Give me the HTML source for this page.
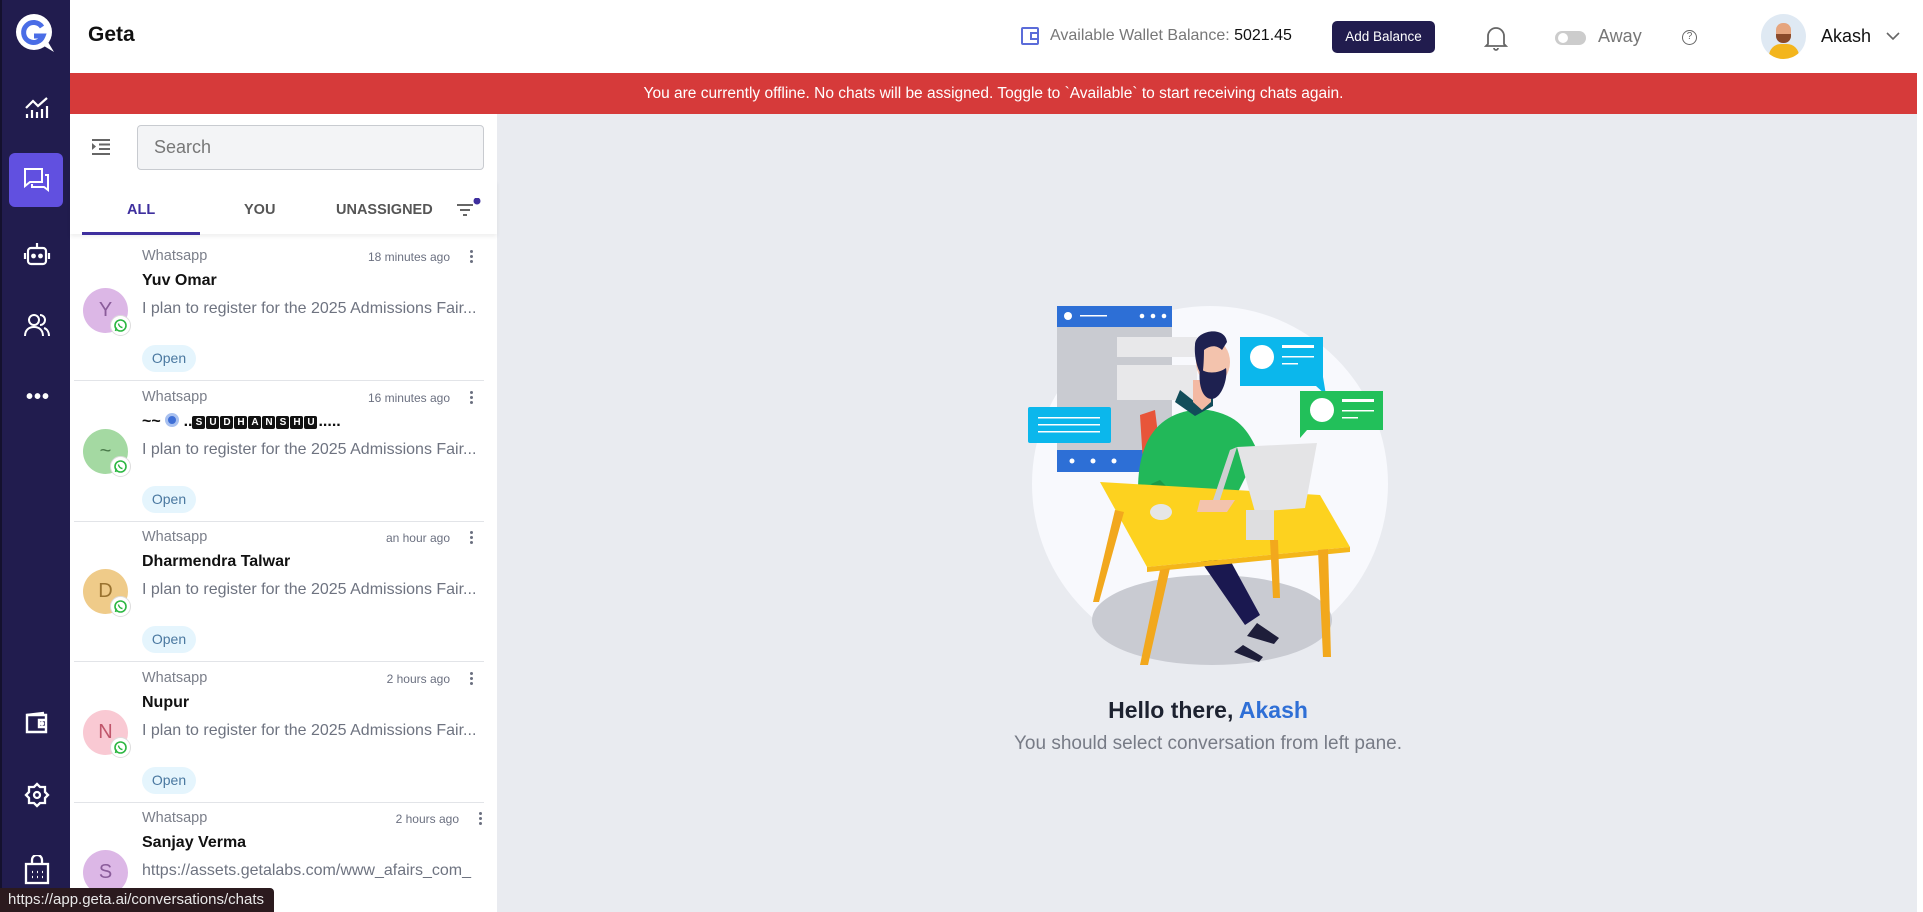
<!DOCTYPE html>
<html style="width:1923px;height:912px;overflow:hidden;background:#e9ebf0"><head><meta charset="utf-8">
<style>
*{box-sizing:border-box;margin:0;padding:0}
body{width:1923px;height:912px;overflow:hidden;font-family:"Liberation Sans",sans-serif;background:#e9ebf0;position:relative}
.abs{position:absolute}
#side{left:0;top:0;width:70px;height:912px;background:#211c4e;border-left:2px solid #14112e}
#hdr{left:70px;top:0;width:1853px;height:73px;background:#fff}
#red{left:70px;top:73px;width:1847px;height:41px;background:#d63a3a;color:#fff;font-size:15.5px;text-align:center;line-height:41px}
#left{left:70px;top:114px;width:427px;height:798px;background:#fff}
.item{position:absolute;left:0;width:427px;height:141px}
.item .sep{position:absolute;left:4px;right:13px;bottom:0;border-bottom:1.5px solid #e2e4e8}
.src{position:absolute;left:72px;top:8px;font-size:14.5px;color:#7b7f8a}
.time{position:absolute;right:47px;top:10px;font-size:12px;color:#6b7080}
.dots{position:absolute;right:23px;top:10px;width:4px;height:14px}
.dots i{display:block;width:3px;height:3px;border-radius:50%;background:#6b7080;margin-bottom:2px}
.nm{position:absolute;left:72px;top:32px;font-size:16px;font-weight:bold;color:#111}
.pv{position:absolute;left:72px;top:60px;font-size:16px;color:#6e7380;white-space:nowrap;width:340px;overflow:hidden}
.pill{position:absolute;left:72px;top:105px;width:54px;height:27px;border-radius:14px;background:#e5f5fd;color:#4a78a0;font-size:14px;text-align:center;line-height:27px}
.av{position:absolute;left:13px;top:48px;width:45px;height:45px;border-radius:50%;font-size:20px;text-align:center;line-height:45px}
.wa{position:absolute;left:40px;top:75px;width:21px;height:21px;border-radius:50%;background:#fff;border:1px solid #ddd}
.sq{display:inline-block;background:#111;color:#fff;font-size:10px;width:13px;height:13px;line-height:13px;text-align:center;border-radius:2px;margin-right:1px;vertical-align:1px}
</style></head><body>

<div id="side" class="abs">
 <svg class="abs" style="left:12px;top:12px" width="44" height="44" viewBox="0 0 44 44"><circle cx="20" cy="20" r="18" fill="#fff"/><path d="M30 34 L40 40 L34 30Z" fill="#fff"/><path d="M28 15 A10 10 0 1 0 29 24 L20 24" fill="none" stroke="#4a6de6" stroke-width="5"/></svg>
 <svg class="abs" style="left:22px;top:96px" width="26" height="24" viewBox="0 0 26 24" fill="none" stroke="#fff" stroke-width="2.2"><path d="M2 12 L9 5 L14 10 L23 2"/><path d="M3 22v-4M8 22v-8M13 22v-6M18 22v-9M23 22v-12"/></svg>
 <div class="abs" style="left:7px;top:153px;width:54px;height:54px;background:#6150e0;border-radius:6px"></div>
 <svg class="abs" style="left:21px;top:167px" width="27" height="26" viewBox="0 0 27 26" fill="none" stroke="#fff" stroke-width="2"><path d="M2 2h17v13H7l-5 4z"/><path d="M22 8h3v15l-4-3H9v-3"/></svg>
 <svg class="abs" style="left:21px;top:240px" width="28" height="28" viewBox="0 0 28 28" fill="none" stroke="#fff" stroke-width="2.2"><rect x="5" y="8" width="18" height="16" rx="3"/><path d="M14 8V3M2 13v6M26 13v6"/><circle cx="10.5" cy="16" r="1.3" fill="#fff"/><circle cx="17.5" cy="16" r="1.3" fill="#fff"/></svg>
 <svg class="abs" style="left:22px;top:312px" width="26" height="26" viewBox="0 0 26 26" fill="none" stroke="#fff" stroke-width="2"><circle cx="10" cy="8" r="5"/><path d="M1 24c0-6 4-9 9-9s9 3 9 9"/><path d="M16 3a5 5 0 0 1 0 10M20 16c3 1 5 4 5 8"/></svg>
 <div class="abs" style="left:24px;top:386px;color:#fff;font-size:20px;font-weight:bold;letter-spacing:1px">•••</div>
 <svg class="abs" style="left:22px;top:711px" width="26" height="24" viewBox="0 0 26 24" fill="none" stroke="#fff" stroke-width="2.4"><path d="M3 4h19v17H3z"/><path d="M3 4l17-2"/><path d="M22 9h-7v7h7"/><circle cx="18" cy="12.5" r="1" fill="#fff"/></svg>
 <svg class="abs" style="left:22px;top:782px" width="26" height="26" viewBox="0 0 26 26" fill="none" stroke="#fff" stroke-width="2.3"><path d="M13 2l3 3h5v5l3 3-3 3v5h-5l-3 3-3-3H5v-5l-3-3 3-3V5h5z"/><circle cx="13" cy="13" r="3"/></svg>
 <svg class="abs" style="left:22px;top:855px" width="26" height="30" viewBox="0 0 26 30" fill="none" stroke="#fff" stroke-width="2.3"><rect x="2" y="9" width="22" height="19"/><path d="M8 9V5a5 5 0 0 1 10 0v4"/><path d="M8 17h1M13 17h1M18 17h1M8 22h1M13 22h1M18 22h1"/></svg>
</div>

<div id="hdr" class="abs">
 <div class="abs" style="left:18px;top:23px;font-size:21px;font-weight:bold;color:#111">Geta</div>
 <svg class="abs" style="left:950px;top:26px" width="20" height="20" viewBox="0 0 20 20" fill="none" stroke="#5b6cd9" stroke-width="2"><rect x="2" y="2" width="16" height="16" rx="1"/><path d="M18 7h-7v6h7"/></svg>
 <div class="abs" style="left:980px;top:27px;font-size:16px;color:#777"><span>Available Wallet Balance:</span> <span style="color:#111">5021.45</span></div>
 <div class="abs" style="left:1262px;top:21px;width:103px;height:32px;border-radius:5px;background:#211c4e;color:#fff;font-size:13.5px;text-align:center;line-height:32px">Add Balance</div>
 <svg class="abs" style="left:1414px;top:24px" width="24" height="27" viewBox="0 0 24 27" fill="none" stroke="#666" stroke-width="1.8"><path d="M4 20V12a8 8 0 0 1 16 0v8l2 2H2z"/><path d="M10 24a2 2 0 0 0 4 0"/></svg>
 <div class="abs" style="left:1485px;top:31px;width:31px;height:14px;border-radius:7px;background:#ccc"></div>
 <div class="abs" style="left:1488px;top:33px;width:10px;height:10px;border-radius:50%;background:#fff"></div>
 <div class="abs" style="left:1528px;top:26px;font-size:18px;color:#777">Away</div>
 <div class="abs" style="left:1612px;top:30px;width:15px;height:15px;border-radius:50%;border:1.5px solid #666;font-size:10px;text-align:center;line-height:12px;color:#666">?</div>
 <div class="abs" style="left:1691px;top:14px;width:45px;height:45px;border-radius:50%;background:#dfe9f3;overflow:hidden">
  <div class="abs" style="left:8px;top:30px;width:30px;height:22px;border-radius:12px 12px 0 0;background:#f3b51d"></div>
  <div class="abs" style="left:15px;top:9px;width:15px;height:19px;border-radius:7px;background:#e6a57e"></div>
  <div class="abs" style="left:15px;top:20px;width:15px;height:9px;border-radius:0 0 7px 7px;background:#8a4a2a"></div>
 </div>
 <div class="abs" style="left:1751px;top:26px;font-size:18px;color:#111">Akash</div>
 <svg class="abs" style="left:1816px;top:32px" width="14" height="9" viewBox="0 0 14 9" fill="none" stroke="#666" stroke-width="1.6"><path d="M1 1l6 6 6-6"/></svg>
</div>

<div id="red" class="abs">You are currently offline. No chats will be assigned. Toggle to `Available` to start receiving chats again.</div>
<div class="abs" style="left:1917px;top:73px;width:6px;height:839px;background:#fff"></div>

<div id="left" class="abs">
 <svg class="abs" style="left:22px;top:24px" width="18" height="18" viewBox="0 0 18 18" fill="#666"><rect x="0" y="1" width="18" height="2"/><rect x="7" y="5.5" width="11" height="2"/><rect x="7" y="10" width="11" height="2"/><rect x="0" y="15" width="18" height="2"/><path d="M0 5l4 3.5L0 12z"/></svg>
 <div class="abs" style="left:67px;top:11px;width:347px;height:45px;border:1px solid #c8cbd0;border-radius:4px;background:#f3f4f6;font-size:18px;color:#777;padding-left:16px;line-height:43px">Search</div>
 <div class="abs" style="left:0;top:66px;width:427px;height:54px;box-shadow:0 3px 4px rgba(0,0,0,.06)"></div>
 <div class="abs" style="left:57px;top:88px;font-size:14.5px;font-weight:bold;color:#3e2f9e">ALL</div>
 <div class="abs" style="left:174px;top:88px;font-size:14.5px;font-weight:bold;color:#555">YOU</div>
 <div class="abs" style="left:266px;top:88px;font-size:14.5px;font-weight:bold;color:#555">UNASSIGNED</div>
 <div class="abs" style="left:12px;top:118px;width:118px;height:3px;background:#3e2f9e"></div>
 <svg class="abs" style="left:387px;top:84px" width="24" height="20" viewBox="0 0 24 20" fill="#666"><rect x="0" y="6" width="16" height="2"/><rect x="3" y="11" width="10" height="2"/><rect x="6" y="16" width="4" height="2"/><circle cx="20" cy="3" r="3.5" fill="#3e2f9e"/></svg>

 <div class="item" style="top:126px">
  <div class="src">Whatsapp</div><div class="time">18 minutes ago</div><div class="dots"><i></i><i></i><i></i></div>
  <div class="nm">Yuv Omar</div><div class="pv">I plan to register for the 2025 Admissions Fair...</div><div class="pill">Open</div>
  <div class="av" style="background:#dcb7e6;color:#8a5c9a">Y</div><div class="wa"><svg width="19" height="19" viewBox="0 0 19 19"><circle cx="9.5" cy="9.5" r="5.5" fill="none" stroke="#2cb742" stroke-width="1.6"/><path d="M4.5 15l1-3.5" stroke="#2cb742" stroke-width="1.6"/><path d="M7.5 7.5c0 2 2 4 4 4" stroke="#2cb742" stroke-width="1.4" fill="none"/></svg></div>
  <div class="sep"></div>
 </div>
 <div class="item" style="top:267px">
  <div class="src">Whatsapp</div><div class="time">16 minutes ago</div><div class="dots"><i></i><i></i><i></i></div>
  <div class="nm">~~ <span style="display:inline-block;width:14px;height:14px;border-radius:50%;background:#3f6fd6;border:3px solid #a9c1f0;vertical-align:-1px"></span> ..<span class="sq">S</span><span class="sq">U</span><span class="sq">D</span><span class="sq">H</span><span class="sq">A</span><span class="sq">N</span><span class="sq">S</span><span class="sq">H</span><span class="sq">U</span>.....</div>
  <div class="pv">I plan to register for the 2025 Admissions Fair...</div><div class="pill">Open</div>
  <div class="av" style="background:#a4d9a2;color:#4a7a4a">~</div><div class="wa"><svg width="19" height="19" viewBox="0 0 19 19"><circle cx="9.5" cy="9.5" r="5.5" fill="none" stroke="#2cb742" stroke-width="1.6"/><path d="M4.5 15l1-3.5" stroke="#2cb742" stroke-width="1.6"/><path d="M7.5 7.5c0 2 2 4 4 4" stroke="#2cb742" stroke-width="1.4" fill="none"/></svg></div>
  <div class="sep"></div>
 </div>
 <div class="item" style="top:407px">
  <div class="src">Whatsapp</div><div class="time">an hour ago</div><div class="dots"><i></i><i></i><i></i></div>
  <div class="nm">Dharmendra Talwar</div><div class="pv">I plan to register for the 2025 Admissions Fair...</div><div class="pill">Open</div>
  <div class="av" style="background:#efcb89;color:#9a7330">D</div><div class="wa"><svg width="19" height="19" viewBox="0 0 19 19"><circle cx="9.5" cy="9.5" r="5.5" fill="none" stroke="#2cb742" stroke-width="1.6"/><path d="M4.5 15l1-3.5" stroke="#2cb742" stroke-width="1.6"/><path d="M7.5 7.5c0 2 2 4 4 4" stroke="#2cb742" stroke-width="1.4" fill="none"/></svg></div>
  <div class="sep"></div>
 </div>
 <div class="item" style="top:548px">
  <div class="src">Whatsapp</div><div class="time">2 hours ago</div><div class="dots"><i></i><i></i><i></i></div>
  <div class="nm">Nupur</div><div class="pv">I plan to register for the 2025 Admissions Fair...</div><div class="pill">Open</div>
  <div class="av" style="background:#f9c9d3;color:#c0566b">N</div><div class="wa"><svg width="19" height="19" viewBox="0 0 19 19"><circle cx="9.5" cy="9.5" r="5.5" fill="none" stroke="#2cb742" stroke-width="1.6"/><path d="M4.5 15l1-3.5" stroke="#2cb742" stroke-width="1.6"/><path d="M7.5 7.5c0 2 2 4 4 4" stroke="#2cb742" stroke-width="1.4" fill="none"/></svg></div>
  <div class="sep"></div>
 </div>
 <div class="item" style="top:688px">
  <div class="src">Whatsapp</div><div class="time" style="right:38px">2 hours ago</div><div class="dots" style="right:14px"><i></i><i></i><i></i></div>
  <div class="nm">Sanjay Verma</div><div class="pv" style="width:360px">https://assets.getalabs.com/www_afairs_com_</div>
  <div class="av" style="background:#dcb7e6;color:#8a5c9a">S</div>
 </div>
</div>

<div class="abs" style="left:0;top:888px;width:274px;height:24px;background:#2b1a1e;border-radius:0 4px 0 0;color:#e8e8e8;font-size:15px;line-height:24px;padding-left:8px">https://app.geta.ai/conversations/chats</div>

<svg class="abs" style="left:1020px;top:298px" width="380" height="372" viewBox="1020 298 380 372">
 <circle cx="1210" cy="484" r="178" fill="#f8f9fd"/>
 <ellipse cx="1212" cy="620" rx="120" ry="45" fill="#c9cbd2"/>
 <rect x="1057" y="306" width="115" height="166" fill="#c9cbd1"/>
 <rect x="1057" y="306" width="115" height="21" fill="#2d6fd6"/>
 <circle cx="1068" cy="316" r="4" fill="#fff"/><rect x="1080" y="315" width="27" height="1.5" fill="#fff"/>
 <circle cx="1142" cy="316" r="2.3" fill="#fff"/><circle cx="1153" cy="316" r="2.3" fill="#fff"/><circle cx="1164" cy="316" r="2.3" fill="#fff"/>
 <rect x="1057" y="450" width="115" height="22" fill="#2d6fd6"/>
 <circle cx="1072" cy="461" r="2.5" fill="#fff"/><circle cx="1093" cy="461" r="2.5" fill="#fff"/><circle cx="1114" cy="461" r="2.5" fill="#fff"/>
 <rect x="1117" y="337" width="80" height="20" fill="#e8e8ea"/><rect x="1117" y="365" width="80" height="35" fill="#e8e8ea"/>
 <rect x="1028" y="407" width="83" height="36" rx="2" fill="#0bb7ec"/>
 <rect x="1038" y="417" width="62" height="1.5" fill="#fff"/><rect x="1038" y="424" width="62" height="1.5" fill="#fff"/><rect x="1038" y="431" width="62" height="1.5" fill="#fff"/>
 <path d="M1240 337h83v40h0l3 18-10-9h-76z" fill="#0bb7ec"/>
 <circle cx="1262" cy="357" r="12" fill="#fff"/><rect x="1282" y="345" width="32" height="3" fill="#fff"/><rect x="1282" y="356" width="32" height="1.5" fill="#fff"/><rect x="1282" y="363" width="16" height="1.5" fill="#fff"/>
 <path d="M1300 391h83v39h-76l-7 8z" fill="#22c05a"/>
 <circle cx="1322" cy="410" r="12" fill="#fff"/><rect x="1342" y="399" width="32" height="3" fill="#fff"/><rect x="1342" y="410" width="32" height="1.5" fill="#fff"/><rect x="1342" y="417" width="16" height="1.5" fill="#fff"/>
 <path d="M1140 415l15-5 10 80-20 5z" fill="#e8553a"/>
 <path d="M1138 490c0-50 20-75 55-80h15c30 5 40 20 50 42l-20 40h-85z" fill="#22b859"/>
 <path d="M1180 390l15 12 18-8v12l-18 10-20-14z" fill="#124d5a"/>
 <path d="M1193 380h18v22l-9 8-9-8z" fill="#f3b9a3"/>
 <ellipse cx="1213" cy="362" rx="17" ry="22" fill="#f3c3ad"/>
 <path d="M1195 345c0-15 30-20 32-3l-5 8c-5-5-12-5-18 0 0 0 0 20-2 25-5-5-8-20-7-30z" fill="#1e2150"/>
 <path d="M1200 368c5 6 18 6 26 0 2 10-4 30-14 31-10 0-14-15-12-31z" fill="#1e2150"/>
 <path d="M1160 480l30 30 20-4-2 8-32 0-25-30z" fill="#1c9a48"/>
 <path d="M1200 560l30 0 30 55-15 10z" fill="#1a1850"/>
 <path d="M1257 623l22 15-5 6-27-8z" fill="#1e1e3a"/><path d="M1243 645l20 12-4 5-25-10z" fill="#1e1e3a"/>
 <path d="M1100 482l220 13 30 52-203 20z" fill="#fdd21f"/>
 <path d="M1147 567l203-20v5l-203 20z" fill="#f4b61a"/>
 <path d="M1115 510l-22 92h6l25-90z" fill="#f2a81d"/>
 <path d="M1160 570l-20 95h8l22-97z" fill="#f2a81d"/>
 <path d="M1318 550l5 107h8l-3-108z" fill="#f2a81d"/>
 <path d="M1270 540l3 58h7l-2-58z" fill="#f2a81d"/>
 <ellipse cx="1161" cy="512" rx="11" ry="8" fill="#e6e6e6"/>
 <path d="M1237 447l80-4-12 65-50 4z" fill="#e4e4e6"/>
 <path d="M1230 450l7-3-20 62h-7z" fill="#cfcfd2"/>
 <rect x="1246" y="510" width="28" height="30" fill="#dedee0"/>
 <path d="M1200 500h35l-8 12h-30z" fill="#f3c3ad"/>
</svg>

<div class="abs" style="left:900px;top:697px;width:616px;text-align:center;font-size:23px;font-weight:bold;color:#1d2230">Hello there, <span style="color:#2f6fd6">Akash</span></div>
<div class="abs" style="left:900px;top:733px;width:616px;text-align:center;font-size:19px;color:#777b86">You should select conversation from left pane.</div>
</body></html>
